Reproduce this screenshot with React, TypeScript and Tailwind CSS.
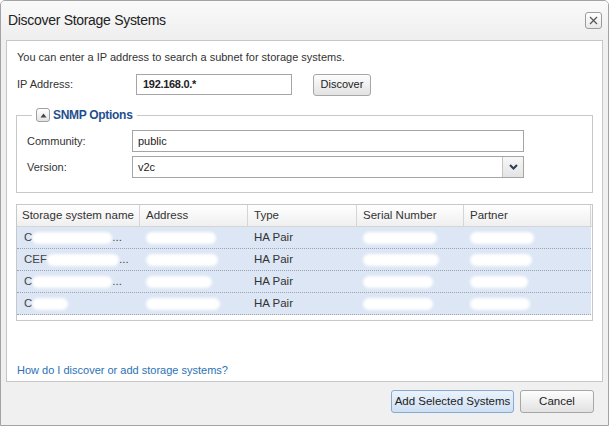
import React from "react";

const font = { fontFamily: "'Liberation Sans', Arial, sans-serif" };

type Row = { name: [string, number, string]; addr: number; serial: number; partner: number };

const rows: Row[] = [
  { name: ["C", 80, "..."], addr: 70, serial: 74, partner: 64 },
  { name: ["CEF", 72, "..."], addr: 72, serial: 76, partner: 62 },
  { name: ["C", 80, "..."], addr: 66, serial: 70, partner: 58 },
  { name: ["C", 36, ""], addr: 74, serial: 70, partner: 60 },
];

function Blob({ w }: { w: number }) {
  return (
    <span className="inline-flex items-center h-[14px] relative" style={{ width: w }}>
      <span className="absolute inset-x-0 top-[1px] h-[12px] bg-white rounded-[6px] blur-[1.5px]" />
    </span>
  );
}

export default function App() {
  return (
    <div
      className="w-[609px] h-[426px] bg-[#f0f0f0] border border-[#a3a3a3] rounded-t-[5px] flex flex-col text-[#333] overflow-hidden"
      style={font}
    >
      {/* Title bar */}
      <div className="h-[39px] shrink-0 flex items-center justify-between pl-[7px] pr-[6px] bg-gradient-to-b from-[#fafafa] to-[#eeeeee]">
        <span className="text-[14px] text-[#222] tracking-[-0.3px]">Discover Storage Systems</span>
        <button className="w-[17px] h-[17px] border border-[#9c9c9c] rounded-[3px] bg-gradient-to-b from-white to-[#e8e8e8] flex items-center justify-center">
          <svg width="9" height="9" viewBox="0 0 9 9">
            <path d="M1 1L8 8M8 1L1 8" stroke="#555" strokeWidth="1.2" />
          </svg>
        </button>
      </div>

      {/* Content panel */}
      <div className="mx-[5px] h-[342px] shrink-0 bg-white border border-[#c6c6c6] flex flex-col px-[10px] pt-[9px] text-[11px]">
        <p className="leading-[14px] text-[#333]">You can enter a IP address to search a subnet for storage systems.</p>

        <div className="flex items-center mt-[9px] h-[23px]">
          <span className="w-[119px]">IP Address:</span>
          <div className="w-[156px] h-[21px] border border-[#a5a5a5] bg-white flex items-center px-[6px] text-[11px] font-bold text-[#222] tracking-[-0.3px]">
            192.168.0.*
          </div>
          <button className="ml-[21px] w-[58px] h-[22px] border border-[#a7a7a7] rounded-[3px] bg-gradient-to-b from-[#fdfdfd] to-[#e2e2e2] text-[11px] text-[#222]">
            Discover
          </button>
        </div>

        <fieldset className="-mx-px mt-[10px] h-[87px] border border-[#c8c8c8] pl-[10px] pr-[68px]">
          <legend className="ml-[5px] px-[4px] flex items-center gap-[3px]">
            <span className="w-[14px] h-[14px] border border-[#a0a0a0] rounded-[3px] bg-gradient-to-b from-white to-[#e4e4e4] flex items-center justify-center">
              <svg width="7" height="5" viewBox="0 0 7 5">
                <path d="M3.5 0.5L6.5 4.5H0.5Z" fill="#444" />
              </svg>
            </span>
            <span className="text-[12px] font-bold text-[#1f4f8f] tracking-[-0.3px]">SNMP Options</span>
          </legend>

          <div className="flex items-center mt-[6px] h-[22px]">
            <span className="w-[105px]">Community:</span>
            <div className="flex-1 h-[22px] border border-[#a5a5a5] bg-white flex items-center px-[5px] text-[#222]">public</div>
          </div>
          <div className="flex items-center mt-[4px] h-[22px]">
            <span className="w-[105px]">Version:</span>
            <div className="flex-1 h-[22px] border border-[#a5a5a5] bg-white flex items-center text-[#222]">
              <span className="flex-1 px-[5px]">v2c</span>
              <span className="w-[21px] h-full border-l border-[#c4c4c4] bg-gradient-to-b from-[#f7f7f7] to-[#e4e4e4] flex items-center justify-center">
                <svg width="9" height="6" viewBox="0 0 9 6">
                  <path d="M1 1L4.5 4.5L8 1" stroke="#2c3e56" strokeWidth="2" fill="none" />
                </svg>
              </span>
            </div>
          </div>
        </fieldset>

        {/* Table */}
        <div className="-mx-px mt-[11px] h-[117px] border border-[#c8c8c8] bg-white text-[11.5px]">
          <div className="flex h-[22px] bg-gradient-to-b from-white to-[#efefef] border-b border-[#d5d5d5] text-[#333]">
            <div className="w-[123px] pl-[5px] flex items-center border-r border-[#d5d5d5]">Storage system name</div>
            <div className="w-[108px] pl-[6px] flex items-center border-r border-[#d5d5d5]">Address</div>
            <div className="w-[109px] pl-[6px] flex items-center border-r border-[#d5d5d5]">Type</div>
            <div className="w-[107px] pl-[6px] flex items-center border-r border-[#d5d5d5]">Serial Number</div>
            <div className="w-[127px] pl-[6px] flex items-center border-r border-[#d5d5d5]">Partner</div>
          </div>
          {rows.map((r, i) => (
            <div key={i} className="flex h-[22px] w-[574px] bg-[#dce6f4] border-b border-dotted border-[#9aa4b0]">
              <div className="w-[123px] pl-[7px] flex items-center text-[#444]">
                <span>{r.name[0]}</span>
                <Blob w={r.name[1]} />
                <span>{r.name[2]}</span>
              </div>
              <div className="w-[108px] pl-[6px] flex items-center">
                <Blob w={r.addr} />
              </div>
              <div className="w-[109px] pl-[6px] flex items-center text-[#333]">HA Pair</div>
              <div className="w-[107px] pl-[6px] flex items-center">
                <Blob w={r.serial} />
              </div>
              <div className="w-[127px] pl-[6px] flex items-center">
                <Blob w={r.partner} />
              </div>
            </div>
          ))}
        </div>

        <a className="mt-auto mb-[4px] text-[11px] text-[#2a72b5] leading-[14px]">How do I discover or add storage systems?</a>
      </div>

      {/* Footer */}
      <div className="flex-1 flex items-start justify-end gap-[6px] pt-[8px] pr-[14px] text-[11.5px]">
        <button className="w-[123px] h-[23px] border border-[#86a9d2] rounded-[3px] bg-gradient-to-b from-[#eaf2fc] to-[#cfe0f4] text-[#222]">
          Add Selected Systems
        </button>
        <button className="w-[74px] h-[23px] border border-[#a7a7a7] rounded-[3px] bg-gradient-to-b from-[#fdfdfd] to-[#e2e2e2] text-[#222]">
          Cancel
        </button>
      </div>
    </div>
  );
}
